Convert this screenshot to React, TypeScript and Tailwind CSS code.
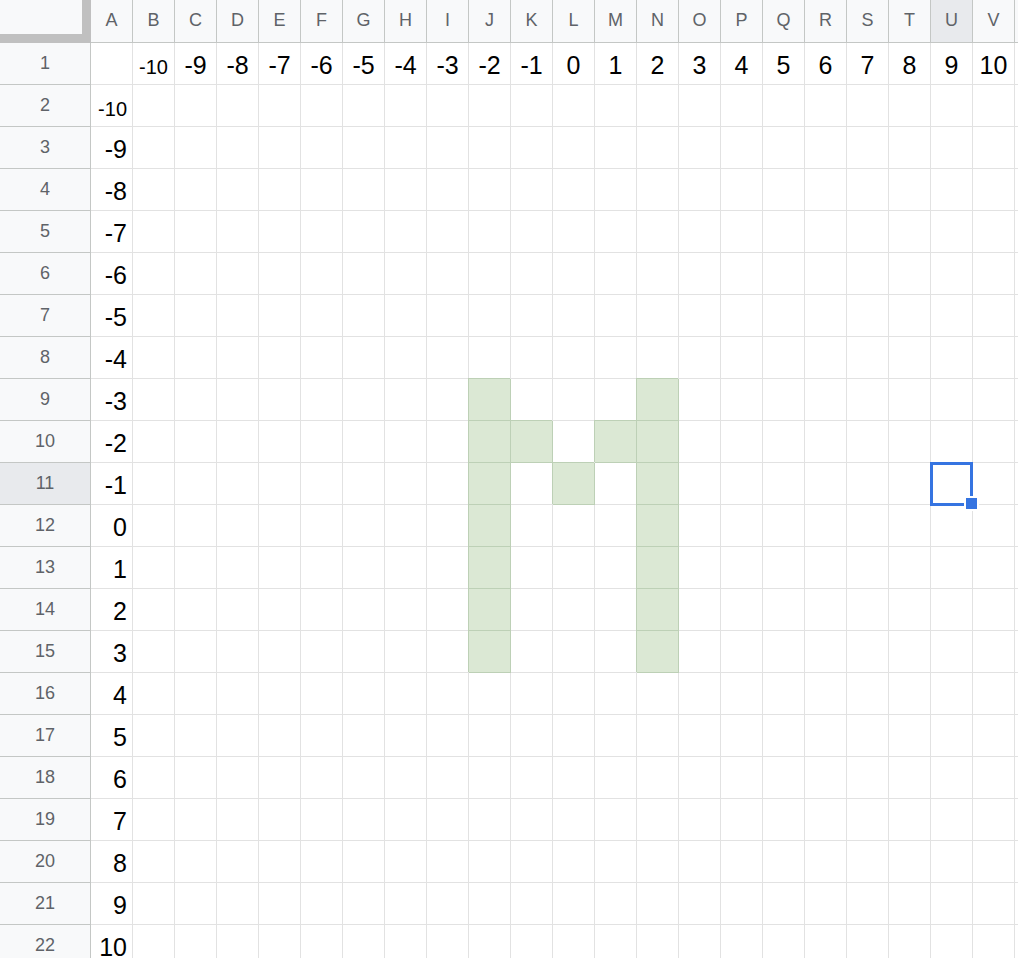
const COLS = "ABCDEFGHIJKLMNOPQRSTUVW".split("");
const ROWS = Array.from({ length: 22 }, (_, i) => i + 1);

const GREEN = new Set([
  "J9", "J10", "J11", "J12", "J13", "J14", "J15",
  "N9", "N10", "N11", "N12", "N13", "N14", "N15",
  "K10", "M10", "L11",
]);

const SEL_COL = "U";
const SEL_ROW = 11;

function cellValue(col: string, row: number): number | null {
  const c = COLS.indexOf(col);
  if (row === 1 && c >= 1 && c <= 21) return c - 11;
  if (col === "A" && row >= 2) return row - 12;
  return null;
}

function ColHeader({ col }: { col: string }) {
  const active = col === SEL_COL;
  return (
    <div
      className={
        active
          ? "flex items-center justify-center bg-[#e8eaed] border-r border-b border-[#c4c7c5] text-[18px] text-[#5f6368]"
          : "flex items-center justify-center bg-[#f8f9fa] border-r border-b border-[#c4c7c5] text-[18px] text-[#5f6368]"
      }
    >
      {/* the last column only peeks in at the edge */}
      <span className="-mt-[2px]">{col === "W" ? "" : col}</span>
    </div>
  );
}

function RowHeader({ row }: { row: number }) {
  const active = row === SEL_ROW;
  return (
    <div
      className={
        active
          ? "flex items-center justify-center bg-[#e8eaed] border-r border-b border-[#c4c7c5] text-[18px] text-[#5f6368]"
          : "flex items-center justify-center bg-[#f8f9fa] border-r border-b border-[#c4c7c5] text-[18px] text-[#5f6368]"
      }
    >
      {row}
    </div>
  );
}

function Cell({ col, row }: { col: string; row: number }) {
  const id = `${col}${row}`;
  const v = cellValue(col, row);
  const green = GREEN.has(id);
  const selected = col === SEL_COL && row === SEL_ROW;
  const small = v === -10;

  return (
    <div
      className={
        green
          ? "relative flex items-end bg-[#dbe8d4] border-r border-b border-[#bdd0b6] shadow-[-1px_-1px_0_0_#bdd0b6]"
          : row === 1
            ? "relative flex items-end justify-center border-r border-b border-[#e2e2e2]"
            : "relative flex items-end justify-end pr-[5px] border-r border-b border-[#e2e2e2]"
      }
    >
      {v !== null && (
        <span
          className={
            small
              ? "text-[20px] leading-[20px] pb-[7px] text-black"
              : "text-[25px] leading-[25px] pb-[6px] text-black"
          }
        >
          {v}
        </span>
      )}
      {selected && (
        <>
          <div className="absolute -left-px -top-px w-[43px] h-[44px] border-[3px] border-[#3574e1] z-10" />
          <div className="absolute left-[33px] top-[33px] w-[15px] h-[15px] bg-[#3574e1] border-2 border-white z-20" />
        </>
      )}
    </div>
  );
}

export default function App() {
  return (
    <div className="w-[1018px] h-[958px] overflow-hidden bg-white font-['Liberation_Sans',Arial,sans-serif]">
      <div className="grid grid-cols-[91px_repeat(23,42px)] grid-rows-[43px_repeat(22,42px)]">
        <div className="bg-[#f8f9fa] border-r-[9px] border-b-[9px] border-[#c0c0c0]" />
        {COLS.map((c) => (
          <ColHeader key={c} col={c} />
        ))}
        {ROWS.map((r) => (
          <div key={r} className="contents">
            <RowHeader row={r} />
            {COLS.map((c) => (
              <Cell key={c + r} col={c} row={r} />
            ))}
          </div>
        ))}
      </div>
    </div>
  );
}
